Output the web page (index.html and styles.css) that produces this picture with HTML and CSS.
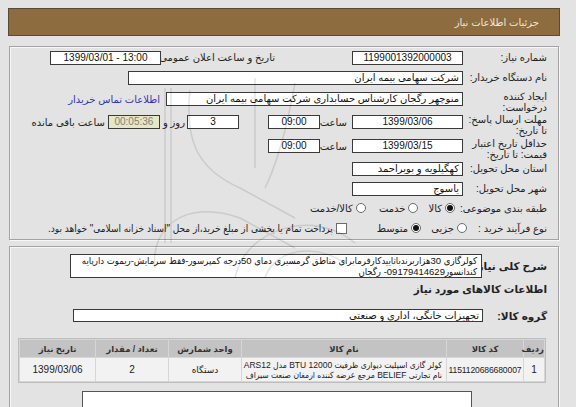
FILE: index.html
```html
<!DOCTYPE html>
<html lang="fa">
<head>
<meta charset="utf-8">
<title>جزئیات اطلاعات نیاز</title>
<link rel="stylesheet" href="styles.css">
</head>
<body>
<div class="page" dir="rtl">
  <div class="titlebar">جزئیات اطلاعات نیاز</div>

  <div class="panel p1">
    <div class="row">
      <div class="lbl">شماره نیاز:</div>
      <div class="box num w111" dir="ltr">1199001392000003</div>
      <div class="lbl lbl-date">تاریخ و ساعت اعلان عمومی:</div>
      <div class="box num w111 gap2" dir="ltr">1399/03/01 - 13:00</div>
    </div>
    <div class="row">
      <div class="lbl">نام دستگاه خریدار:</div>
      <div class="box w335">شرکت سهامی بیمه ایران</div>
    </div>
    <div class="row">
      <div class="lbl two">ایجاد کننده<br>درخواست:</div>
      <div class="box w297">منوچهر رگجان کارشناس حسابداری شرکت سهامی بیمه ایران</div>
      <a class="link" href="#">اطلاعات تماس خریدار</a>
    </div>
    <div class="row">
      <div class="lbl two">مهلت ارسال پاسخ:<br>تا تاریخ:</div>
      <div class="box num w111" dir="ltr">1399/03/06</div>
      <div class="hour">ساعت</div>
      <div class="box num w52" dir="ltr">09:00</div>
      <div class="box num w52 gap29" dir="ltr">3</div>
      <div class="txt gap2">روز و</div>
      <div class="box num w52 remain gap3" dir="ltr">00:05:36</div>
      <div class="txt gap3">ساعت باقی مانده</div>
    </div>
    <div class="row">
      <div class="lbl two">حداقل تاریخ اعتبار<br>قیمت: تا تاریخ:</div>
      <div class="box num w111" dir="ltr">1399/03/15</div>
      <div class="hour">ساعت</div>
      <div class="box num w52" dir="ltr">09:00</div>
    </div>
    <div class="row">
      <div class="lbl">استان محل تحویل:</div>
      <div class="box w111">کهگیلویه و بویراحمد</div>
    </div>
    <div class="row">
      <div class="lbl">شهر محل تحویل:</div>
      <div class="box w111">یاسوج</div>
    </div>
    <div class="row">
      <div class="lbl">طبقه بندی موضوعی:</div>
      <span class="radio checked r-first"></span><span class="opt">کالا</span>
      <span class="radio r-next"></span><span class="opt">خدمت</span>
      <span class="radio r-next2"></span><span class="opt">کالا/خدمت</span>
    </div>
    <div class="row">
      <div class="lbl lbl-narrow">نوع فرآیند خرید :</div>
      <span class="radio"></span><span class="opt">جزیی</span>
      <span class="radio checked r-next"></span><span class="opt">متوسط</span>
      <span class="check"></span><span class="opt long">پرداخت تمام یا بخشی از مبلغ خرید،از محل "اسناد خزانه اسلامی" خواهد بود.</span>
    </div>
  </div>

  <div class="panel p2">
    <div class="row desc-row">
      <div class="blbl w65">شرح کلی نیاز:</div>
      <div class="box desc">کولرگازی 30هزاربرندباتاییدکارفرمابرای مناطق گرمسیری دمای 50درجه کمپرسور-فقط سرمایش-ریموت دارپایه<br>کندانسور09179414629- رگجان</div>
    </div>
    <div class="row sect">
      <div class="blbl">اطلاعات کالاهای مورد نیاز</div>
    </div>
    <div class="row group-row">
      <div class="blbl w64">گروه کالا:</div>
      <div class="box group">تجهیزات خانگی، اداری و صنعتی</div>
    </div>
    <table class="items">
      <colgroup>
        <col class="c-row"><col class="c-code"><col class="c-name"><col class="c-unit"><col class="c-qty"><col class="c-date">
      </colgroup>
      <thead>
        <tr><th>ردیف</th><th>کد کالا</th><th>نام کالا</th><th>واحد شمارش</th><th>تعداد / مقدار</th><th>تاریخ نیاز</th></tr>
      </thead>
      <tbody>
        <tr>
          <td>1</td>
          <td class="code">1151120686680007</td>
          <td class="name">کولر گازی اسپلیت دیواری ظرفیت 12000 BTU مدل ARS12<br>نام تجارتی BELIEF مرجع عرضه کننده ارمغان صنعت سیراف</td>
          <td class="unit">دستگاه</td>
          <td>2</td>
          <td>1399/03/06</td>
        </tr>
      </tbody>
    </table>
    <div class="box notes"></div>
  </div>

  <svg class="wm-logo" aria-hidden="true" width="220" height="200" viewBox="0 0 220 200">
    <g fill="none" stroke="#000" stroke-width="1.5">
      <path d="M20 10 V165"/>
      <path d="M26 10 V165"/>
      <path d="M45 12 C40 60 50 90 95 110 L150 140"/>
      <path d="M110 0 V90"/>
      <path d="M150 5 C140 60 130 90 120 110"/>
      <path d="M10 190 C5 150 40 120 95 140 L150 170"/>
      <path d="M90 200 C100 150 170 130 210 165"/>
      <path d="M120 200 C130 170 170 165 200 185"/>
    </g>
  </svg>
</div>
</body>
</html>
```

FILE: styles.css
```css
* { box-sizing: border-box; }

body {
  margin: 0;
  background: #e3e3e3;
  font-family: "Liberation Sans", "DejaVu Sans", sans-serif;
  font-size: 10px;
  color: #222;
}

.page {
  width: 552px;
  margin: 8px 0 0 8px;
  position: relative;
}

.titlebar {
  height: 28px;
  background: #8d6d3f;
  border: 1px solid #5b4a33;
  color: #f1e8d8;
  display: flex;
  align-items: center;
  padding-right: 20px;
  font-size: 10px;
}

.panel {
  margin: 10px 1px 0;
  border: 1px solid #a3a3a3;
  box-shadow: inset 1px 1px 0 #f7f7f7, 1px 1px 0 #f7f7f7;
}

.p1 {
  display: grid;
  grid-template-rows: 19px 21px 22px 24px 24px 21px 19px 20px 20px;
  padding: 1px 11px 1px 0;
}

.row {
  display: flex;
  align-items: center;
}

.lbl {
  width: 84px;
  flex: none;
  line-height: 11px;
  white-space: nowrap;
}
.lbl.two { padding-top: 6px; }
.lbl-narrow { width: 80px; }
.lbl-date {
  width: 112px;
  margin-right: 77px;
}

.box {
  flex: none;
  height: 14px;
  border: 1px solid #3a3a3a;
  background: #fff;
  line-height: 12px;
  padding: 0 3px;
  white-space: nowrap;
  overflow: hidden;
  text-align: right;
  color: #111;
}
.num { text-align: center; font-size: 10px; }
.w111 { width: 111px; }
.w335 { width: 335px; }
.w297 { width: 297px; }
.w52 { width: 52px; }
.gap2 { margin-right: 2px; }
.gap3 { margin-right: 3px; }
.gap29 { margin-right: 29px; }

.remain {
  background: #e7e7c3;
  color: #808080;
}

.hour {
  width: 32px;
  flex: none;
  padding-right: 5px;
}

.txt { flex: none; white-space: nowrap; }

.link {
  margin-right: 6px;
  color: #3535b0;
  text-decoration: none;
  white-space: nowrap;
}

.radio {
  flex: none;
  width: 10px;
  height: 10px;
  border-radius: 50%;
  border: 1px solid #6b6b6b;
  background: #fff;
  position: relative;
}
.radio.checked::after {
  content: "";
  position: absolute;
  left: 1px; top: 1px;
  width: 6px; height: 6px;
  border-radius: 50%;
  background: #111;
}
.r-first { margin-right: 8px; }
.r-next { margin-right: 10px; }
.r-next2 { margin-right: 13px; }
.opt { margin-right: 3px; white-space: nowrap; flex: none; }
.opt.long {
  font-family: "Liberation Sans", "DejaVu Sans Condensed", "DejaVu Sans", sans-serif;
  font-stretch: condensed;
}

.check {
  flex: none;
  width: 11px;
  height: 11px;
  border: 1px solid #6b6b6b;
  background: #fff;
  margin-right: 30px;
}

.p2 {
  margin-top: 6px;
  padding: 7px 11px 0 0;
  height: 170px;
  display: flex;
  flex-direction: column;
}

.blbl {
  flex: none;
  font-weight: bold;
  font-size: 10.5px;
  white-space: nowrap;
  color: #222;
}
.w65 { width: 65px; }
.w64 { width: 64px; }

.desc {
  width: 412px;
  height: 24px;
  line-height: 11px;
  font-family: "Liberation Sans", "DejaVu Sans Condensed", "DejaVu Sans", sans-serif;
  font-stretch: condensed;
  font-size: 9.5px;
  padding: 0 4px;
}

.sect { margin-top: 5px; height: 14px; }

.group-row { margin-top: 14px; }
.group {
  width: 410px;
  height: 13px;
  line-height: 11px;
}

.items {
  margin-top: 16px;
  margin-right: 1px;
  width: 525px;
  border-collapse: separate;
  border-spacing: 1px;
  background: #d6d6d6;
  border: 1px solid #bdbdbd;
  table-layout: fixed;
}
.c-row { width: 20px; }
.c-code { width: 76px; }
.c-name { width: 204px; }
.c-unit { width: 72px; }
.c-qty { width: 72px; }
.c-date { width: 75px; }

.items th {
  background: #c3c3c3;
  height: 17px;
  font-size: 8.5px;
  font-weight: bold;
  color: #333;
  padding: 0;
  text-align: center;
}
.items td {
  background: #f2f2f2;
  height: 23px;
  font-size: 10px;
  text-align: center;
  padding: 0;
  color: #222;
}
.items td.code {
  font-size: 8.6px;
  letter-spacing: -0.15px;
  white-space: nowrap;
}
.items td.unit { font-size: 9px; }
.items td.name {
  font-family: "Liberation Sans", "DejaVu Sans Condensed", "DejaVu Sans", sans-serif;
  font-stretch: condensed;
  font-size: 8.5px;
  line-height: 10px;
  text-align: right;
  padding-right: 4px;
  white-space: nowrap;
  overflow: hidden;
}

.notes {
  margin-top: 8px;
  margin-right: 75px;
  width: 390px;
  height: 30px;
  border-color: #555;
}

/* faint watermark logo lying over the content */
.wm-logo {
  position: absolute;
  left: 137px;
  top: 70px;
  opacity: 0.1;
  pointer-events: none;
}
```
